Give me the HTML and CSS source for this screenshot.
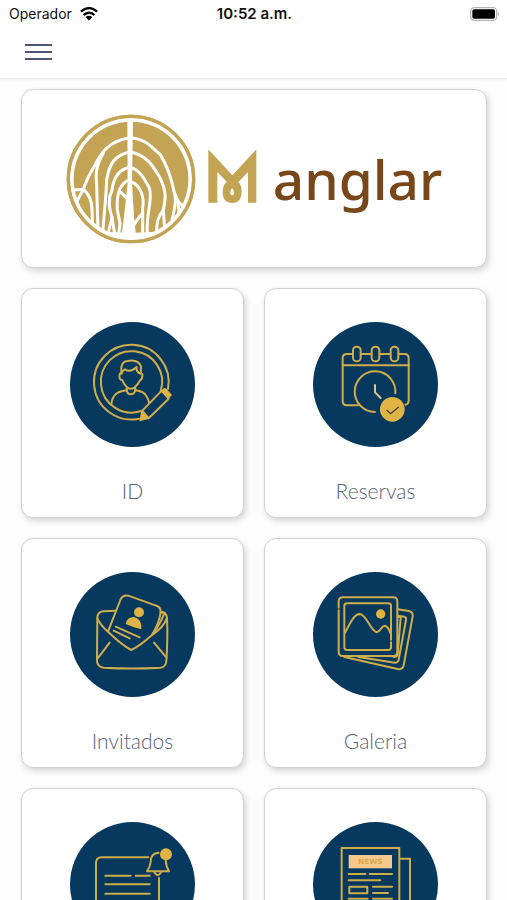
FILE: index.html
```html
<!DOCTYPE html>
<html lang="es">
<head>
    <meta charset="UTF-8">
    <meta name="viewport" content="width=device-width, initial-scale=1">
    <title>Manglar</title>
    <link rel="stylesheet" href="styles.css">
</head>
<body>

    <!-- Status bar -->
    <div class="status-bar">
        <div class="carrier">
            <span>Operador</span>
            <svg class="wifi" viewBox="0 0 54 42" aria-hidden="true">
                <path d="M3 14 C17 0 37 0 51 14" fill="none" stroke="#000" stroke-width="7"/>
                <path d="M11 24 C20 15 34 15 43 24" fill="none" stroke="#000" stroke-width="7"/>
                <path d="M17 30 C23 25 31 25 37 30 L27 41 Z"/>
            </svg>
        </div>
        <time class="clock">10:52 a.m.</time>
        <svg class="battery" viewBox="0 0 90 42" aria-hidden="true">
            <rect x="2" y="2" width="78" height="38" rx="11" fill="#fff" stroke="#b5b5b5" stroke-width="4"/>
            <rect x="7" y="7" width="68" height="28" rx="6"/>
            <path d="M84 14 Q90 21 84 28 Z" fill="#b5b5b5"/>
        </svg>
    </div>

    <header class="top-bar">
        <button class="menu-button" type="button" aria-label="Menú">
            <span></span>
            <span></span>
            <span></span>
        </button>
    </header>

    <main class="content">
        <h1 class="banner">
            <svg class="emblem" viewBox="46 42 390 390" aria-hidden="true">
                <circle cx="241" cy="237" r="188" fill="#fff" stroke="#c3a454" stroke-width="10"/>
                <circle cx="241" cy="237" r="172" fill="#c3a454"/>
                <!-- trunk -->
                <path d="M230 60 H247 L244 250 L250 350 L256 408 H212 L220 350 L231 250 Z" fill="#fff"/>
                <!-- roots -->
                <g fill="none" stroke="#fff" stroke-width="9" stroke-linecap="round" stroke-linejoin="round">
                    <path d="M238 113 C180 122 155 150 133 195 C118 220 106 240 99 266 L80 302"/>
                    <path d="M70 270 L99 268 C112 280 124 300 124 330 L126 380"/>
                    <path d="M158 160 C138 195 134 215 138 255 L142 392"/>
                    <path d="M238 156 C190 165 175 195 168 240 C166 300 160 340 156 400"/>
                    <path d="M238 202 C200 208 188 240 184 270 C170 300 178 335 184 352 L172 402"/>
                    <path d="M238 238 C205 250 197 285 200 330 L208 370 L204 404"/>
                    <path d="M184 352 L192 402"/>
                    <path d="M212 278 L230 296"/>
                    <path d="M240 113 C290 118 305 145 330 165 C350 200 362 230 370 275 L382 304 L400 322"/>
                    <path d="M240 156 C290 168 305 195 326 230 C350 275 344 300 338 330 C322 350 318 365 318 400"/>
                    <path d="M240 202 C270 210 285 245 296 264 C308 300 285 335 290 404"/>
                    <path d="M242 246 C270 255 282 295 276 325 L276 404"/>
                    <path d="M276 340 C264 354 258 358 252 372"/>
                    <path d="M338 330 L342 388"/>
                    <path d="M372 282 C380 315 366 340 362 374"/>
                    <path d="M382 304 L386 350"/>
                </g>
                <path d="M128 390 Q241 408 354 390 Q300 420 241 420 Q182 420 128 390 Z" fill="#fff"/>
                <circle cx="241" cy="237" r="188" fill="none" stroke="#c3a454" stroke-width="10"/>
            </svg>
            <!-- ribbon monogram -->
            <svg class="monogram" viewBox="38 55 147 162" role="img" aria-label="M">
                <path d="M39 56 L111 134 L183 56 V216 H158 V124 L129 154 Q139 164 139 182 Q139 217 111 217 Q82 217 82 184 Q82 163 94 153 L66 124 V216 H39 Z" fill="#c3a454"/>
                <path d="M110 172 Q116 178 116 185 Q116 194 110 194 Q105 194 105 185 Q105 178 110 172 Z" fill="#fff"/>
            </svg>
            <span class="brand-name">anglar</span>
        </h1>

        <nav class="menu-grid">
            <a class="card" href="#id">
                <svg class="card-icon" viewBox="30 36 375 375" aria-hidden="true">
                    <circle class="disc" cx="217.500" cy="223.500" r="187.500"/>
                    <g class="line">
                        <path d="M237 326 A112 112 0 1 1 324 237"/>
                        <path d="M243 303 A92 92 0 1 1 302 244"/>
                        <path d="M185 191 C181 170 186 153 204 153 C218 148 239 154 243 170 L242 191 Q228 187 230 171 Q211 189 195 178 Q186 182 185 191 Z"/>
                        <path d="M184 188 Q176 192 179 205 Q183 211 187 211 Q190 222 202 233 Q213 240 224 232 Q235 222 240 211 Q248 207 247 192 L242 189"/>
                        <path d="M200 234 V241 Q173 244 164 256 Q155 266 154 284 M226 234 V241 Q251 244 259 258 Q266 268 267 278"/>
                        <path d="M200 239 Q201 253 212 253 Q224 253 226 239"/>
                        <path d="M303 244 L247 302 L266 325 L326 266"/>
                    </g>
                    <path class="solid" d="M302 244 L312 234 Q316 233 320 237 L336 255 L324 268 Z"/>
                    <path class="solid" d="M244 302 L269 326 L238 334 Z"/>
                </svg>
                <span class="card-label">ID</span>
            </a>

            <a class="card" href="#reservas">
                <svg class="card-icon" viewBox="30 36 375 375" aria-hidden="true">
                    <circle class="disc" cx="217.500" cy="223.500" r="187.500"/>
                    <g class="line">
                        <path d="M165 286 H131 Q119 286 119 274 V145 Q119 132 132 132 H149 M174 132 H205 M230 132 H262 M287 132 H304 Q317 132 317 145 V272 Q317 282 307 284"/>
                        <path d="M119 166 H317"/>
                        <rect x="150" y="110" width="23" height="44" rx="11"/>
                        <rect x="206" y="110" width="23" height="44" rx="11"/>
                        <rect x="263" y="110" width="23" height="44" rx="11"/>
                        <path d="M216 306 A61 61 0 1 1 277 250"/>
                        <path class="pale" d="M216 225 V247 L233 264"/>
                    </g>
                    <circle class="solid" cx="268" cy="298" r="37"/>
                    <path d="M251 300 L263 311 L287 291" fill="none" stroke="#413a35" stroke-width="4"/>
                </svg>
                <span class="card-label">Reservas</span>
            </a>

            <a class="card" href="#invitados">
                <svg class="card-icon" viewBox="30 31 375 375" aria-hidden="true">
                    <circle class="disc" cx="217.500" cy="218.500" r="187.500"/>
                    <g class="line">
                        <path d="M168 147 L130 149 Q112 151 112 169 L111 298 Q112 315 130 318 Q217 323 302 318 Q318 316 319 298 Q324 225 321 169 Q320 151 302 150"/>
                        <path d="M112 170 Q121 190 144 210 Q187 251 214 265 Q240 253 275 221 Q311 197 320 171"/>
                        <path d="M144 210 L181 115 Q188 99 205 102 L286 131 Q303 136 302 151 Q299 181 276 220"/>
                        <path d="M302 151 L313 155 Q302 185 276 220"/>
                        <path d="M113 290 L149 243 M319 287 L282 243"/>
                        <path d="M167 195 L239 227 M161 207 L209 230"/>
                    </g>
                    <circle class="solid" cx="237" cy="152" r="15"/>
                    <path class="solid" d="M197 187 Q201 166 222 166 Q246 171 244 203 Q222 198 197 187 Z"/>
                </svg>
                <span class="card-label">Invitados</span>
            </a>

            <a class="card" href="#galeria">
                <svg class="card-icon" viewBox="30 31 375 375" aria-hidden="true">
                    <circle class="disc" cx="217.500" cy="218.500" r="187.500"/>
                    <g class="line">
                        <path d="M107 138 V120 Q107 107 120 107 H270 Q283 107 283 120 V270 Q283 283 270 283 H120 Q107 283 107 270 V146"/>
                        <path d="M264 234 V133 Q264 125 256 125 H132 Q124 125 124 133 V257 Q124 265 132 265 H256 Q264 265 264 257 V242"/>
                        <path d="M126 213 C141 187 151 158 170 157 C190 157 202 207 221 212 C233 211 234 192 245 192 Q256 194 263 216"/>
                        <path d="M284 143 L317 148 Q331 151 329 164 L302 311 Q299 325 284 322 L124 286"/>
                        <path d="M286 162 L304 165 Q311 167 309 175 L287 294 Q285 304 276 303 L166 286"/>
                        <path d="M286 165 L293 167 L284 278 M284 280 Q281 286 272 286"/>
                    </g>
                    <circle class="solid" cx="233" cy="157" r="14"/>
                </svg>
                <span class="card-label">Galeria</span>
            </a>

            <a class="card" href="#avisos" aria-label="Avisos">
                <svg class="card-icon" viewBox="30 128 375 375" aria-hidden="true">
                    <circle class="disc" cx="217.500" cy="315.500" r="187.500"/>
                    <g class="line">
                        <path d="M265 234 H125 Q108 234 108 252 V395 Q108 412 125 412 H280 Q297 412 297 395 V296"/>
                        <path d="M136 289 H212 M227 289 H269 M136 315 H269 M136 343 H269 M136 370 H240"/>
                        <path d="M296 220 Q272 221 272 248 Q270 264 261 276 H327 Q318 262 317 242"/>
                        <path d="M283 279 Q293 297 303 279"/>
                    </g>
                    <circle class="solid" cx="318" cy="225" r="18"/>
                </svg>
            </a>

            <a class="card" href="#noticias" aria-label="Noticias">
                <svg class="card-icon" viewBox="30 128 375 375" aria-hidden="true">
                    <circle class="disc" cx="217.500" cy="315.500" r="187.500"/>
                    <g class="line">
                        <path d="M116 206 H289 V426 H116 Z M289 238 H321 V426 H289"/>
                        <path d="M137 284 H187 M200 284 H267 M137 303 H232 M210 322 H267 M210 341 H255 M137 358 H194 M210 358 H267"/>
                        <rect x="139" y="322" width="54" height="20"/>
                    </g>
                    <rect x="137" y="227" width="130" height="40" fill="#f5c88c"/>
                    <text class="news-text" x="202" y="255" text-anchor="middle">NEWS</text>
                </svg>
            </a>
        </nav>
    </main>

</body>
</html>
```
FILE: styles.css
```css
* {
    box-sizing: border-box;
}
body {
    display: flex;
    flex-direction: column;
    height: 100vh;
    margin: 0;
    background: #fdfdfd;
    font-family: Lato, sans-serif;
    color: #56617a;
}
.status-bar {
    display: grid;
    flex: none;
    grid-template-columns: 1fr auto 1fr;
    align-items: center;
    height: 27px;
    padding: 0 7px 0 9px;
    background: #fff;
    color: #111;
    font-family: Inter, sans-serif;
    font-size: 14px;
}
.carrier {
    display: flex;
    align-items: center;
    gap: 8px;
}
.wifi {
    width: 18px;
    height: 14px;
}
.clock {
    font-size: 15px;
    font-weight: 600;
}
.battery {
    width: 30px;
    height: 14px;
    justify-self: end;
}
.top-bar {
    display: flex;
    flex: none;
    align-items: center;
    height: 52px;
    padding: 0 25px 2px;
    background: #fff;
    border-bottom: 1px solid #ececec;
    box-shadow: 0 1px 2px rgba(0, 0, 0, 0.05);
}
.menu-button {
    display: flex;
    flex-direction: column;
    gap: 5px;
    width: 27px;
    padding: 0;
    border: none;
    background: none;
    cursor: pointer;
}
.menu-button span {
    height: 2px;
    background: #4b5474;
}
/* only the cards scroll, the bars stay on top */
.content {
    flex: 1;
    min-height: 0;
    overflow-y: auto;
    scrollbar-width: none;
    padding: 10px 20px 20px 21px;
}
.banner,
.card {
    background: #fff;
    border: 1px solid #d2d2d2;
    border-radius: 12px;
    box-shadow: 2px 3px 6px rgba(0, 0, 0, 0.16);
}
.banner {
    display: flex;
    align-items: center;
    justify-content: center;
    margin: 0 0 20px;
    padding: 24px 16px 23px;
}
.emblem {
    width: 130px;
    height: 130px;
}
.monogram {
    width: 49px;
    height: 54px;
    margin: 0 16px 6px 12px;
}
.brand-name {
    color: #774719;
    font-family: "Noto Sans", sans-serif;
    font-size: 55px;
    font-weight: 500;
    line-height: 80px;
}
.menu-grid {
    display: grid;
    grid-template-columns: 1fr 1fr;
    grid-auto-rows: 1fr;
    gap: 20px;
}
.card {
    display: flex;
    flex-direction: column;
    align-items: center;
    gap: 30px;
    padding: 33px 10px 12px;
    color: inherit;
    text-decoration: none;
}
.card-icon {
    width: 125px;
    height: 125px;
}
.card-label {
    font-size: 21px;
    font-weight: 300;
    line-height: 28px;
}
.disc {
    fill: #07395f;
}
.line {
    fill: none;
    stroke: #d0ad4b;
    stroke-width: 6px;
    stroke-linecap: round;
    stroke-linejoin: round;
}
.pale {
    stroke: #dcc492;
}
.solid {
    fill: #dfb445;
}
.news-text {
    fill: #d9a94e;
    font-family: "DejaVu Sans", sans-serif;
    font-size: 22px;
    font-weight: bold;
}
```
